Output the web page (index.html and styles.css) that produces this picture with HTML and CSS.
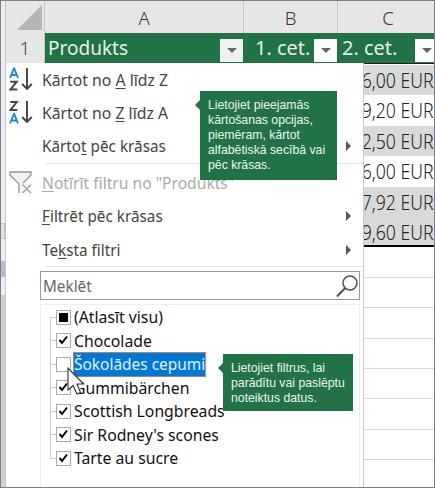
FILE: index.html
```html
<!DOCTYPE html>
<html lang="lv">
<head>
    <meta charset="UTF-8">
    <meta name="viewport" content="width=device-width, initial-scale=1">
    <title>Filtrs</title>
    <link rel="stylesheet" href="styles.css">
</head>
<body>
<div class="window">
    <div class="edge">
        <span class="tab"></span>
        <span class="tab blue"></span>
        <span class="scroll"></span>
    </div>

    <div class="sheet">
        <!-- column letters -->
        <div class="letters">
            <div class="corner"><svg width="25" height="25"><path d="M25 0V25H0z" fill="#b4b4b4"/></svg></div>
            <div class="letter col-a">A</div>
            <div class="letter col-b">B</div>
            <div class="letter col-c">C</div>
        </div>

        <!-- header row -->
        <div class="heads">
            <div class="rownum">1</div>
            <div class="head col-a"><span class="label">Produkts</span><i class="drop open"></i></div>
            <div class="head col-b"><span class="label wide">1. cet.</span><i class="drop"></i></div>
            <div class="head col-c"><span class="label wide">2. cet.</span><i class="drop"></i></div>
        </div>

        <div class="content">
            <div class="menu">
                <div class="item">
                    <svg class="icon" width="26" height="26"><g fill="none" stroke-width="1.9"><path d="M1 11L4.9 1.5h.3L9 11M2.4 8h5.4" stroke="#1e88d2"/><path d="M1.3 14.7h6.5L1.5 22.5h6.8M18 1v21M13.2 17l4.8 5 4.8-5" stroke="#444"/></g></svg>
                    <span class="text sort">Kārtot no <u>A</u> līdz Z</span>
                </div>
                <div class="item">
                    <svg class="icon" width="26" height="26"><g fill="none" stroke-width="1.9"><path d="M1 23.5L4.9 14h.3L9 23.5M2.4 20.5h5.4" stroke="#1e88d2"/><path d="M1.3 2h6.5L1.5 10h6.8M18 1v21M13.2 17l4.8 5 4.8-5" stroke="#444"/></g></svg>
                    <span class="text sort">Kārtot no <u>Z</u> līdz A</span>
                </div>
                <div class="item">
                    <span class="icon"></span>
                    <span class="text">Kārto<u>t</u> pēc krāsas</span>
                    <i class="arrow"></i>
                </div>
                <div class="line"></div>
                <div class="item off">
                    <svg class="icon" width="26" height="26"><path d="M1 2h21v3l-8 8v8l-5-4v-4L1 5z" fill="#f1f1f1"/><g fill="none" stroke="#999" stroke-width="1.4"><path d="M10 23V14L1 5V2h21v3l-8 8"/><path d="M13.5 14.5l8.5 8.5M22 14.5L13.5 23" stroke="#aaa" stroke-width="1.7"/></g></svg>
                    <span class="text"><u>N</u>otīrīt filtru no "Produkts"</span>
                </div>
                <div class="item">
                    <span class="icon"></span>
                    <span class="text"><u>F</u>iltrēt pēc krāsas</span>
                    <i class="arrow"></i>
                </div>
                <div class="item">
                    <span class="icon"></span>
                    <span class="text">Te<u>k</u>sta filtri</span>
                    <i class="arrow"></i>
                </div>
                <div class="line"></div>

                <div class="search">
                    <span class="text">Meklēt</span>
                    <svg width="24" height="24"><circle cx="15" cy="9" r="7" fill="#fafafa" stroke="#505050" stroke-width="1.5"/><path d="M10 14.3L2 22.5" stroke="#505050" stroke-width="2"/></svg>
                </div>

                <div class="list">
                    <div class="row"><span class="box all"></span><span class="name">(Atlasīt visu)</span></div>
                    <div class="row"><span class="box"><svg width="11" height="11"><path d="M1.5 5l2.5 3L9 1.5" class="tick"/></svg></span><span class="name">Chocolade</span></div>
                    <div class="row"><span class="box"></span><span class="name selected">Šokolādes cepumi</span></div>
                    <div class="row"><span class="box"><svg width="11" height="11"><path d="M1.5 5l2.5 3L9 1.5" class="tick"/></svg></span><span class="name">Gummibärchen</span></div>
                    <div class="row"><span class="box"><svg width="11" height="11"><path d="M1.5 5l2.5 3L9 1.5" class="tick"/></svg></span><span class="name">Scottish Longbreads</span></div>
                    <div class="row"><span class="box"><svg width="11" height="11"><path d="M1.5 5l2.5 3L9 1.5" class="tick"/></svg></span><span class="name">Sir Rodney's scones</span></div>
                    <div class="row"><span class="box"><svg width="11" height="11"><path d="M1.5 5l2.5 3L9 1.5" class="tick"/></svg></span><span class="name">Tarte au sucre</span></div>
                </div>
            </div>

            <div class="cells">
                <div class="cell grey"><span>6,00 EUR</span></div>
                <div class="cell"><span>9,20 EUR</span></div>
                <div class="cell grey"><span>2,50 EUR</span></div>
                <div class="cell"><span>6,00 EUR</span></div>
                <div class="cell grey"><span>7,92 EUR</span></div>
                <div class="cell grey last"><span>9,60 EUR</span></div>
                <div class="cell empty"></div>
                <div class="cell empty"></div>
                <div class="cell empty"></div>
                <div class="cell empty"></div>
                <div class="cell empty"></div>
                <div class="cell empty"></div>
                <div class="cell empty"></div>
                <div class="cell"></div>
            </div>
        </div>
    </div>

    <div class="tip tip-sort">Lietojiet pieejamās<br>kārtošanas opcijas,<br>piemēram, kārtot<br>alfabētiskā secībā vai<br>pēc krāsas.</div>
    <div class="tip tip-filter">Lietojiet filtrus, lai<br>parādītu vai paslēptu<br>noteiktus datus.</div>
    <svg class="cursor" width="18" height="30"><path d="M1 1v22l5-4.5 4 8.5 3.5-1.5L10 17h6.5z" fill="#fff" stroke="#333" stroke-width="1.1"/></svg>
</div>
</body>
</html>
```
FILE: styles.css
```css
* {
    box-sizing: border-box;
}

body {
    margin: 0;
    font-family: "Noto Sans", "Open Sans", sans-serif;
}

.window {
    position: relative;
    display: flex;
    width: 435px;
    height: 488px;
    border: 1px solid #7f7f7f;
    overflow: hidden;
    background: #fff;
}

.edge {
    display: flex;
    flex-direction: column;
    width: 5px;
    padding-top: 222px;
    background: #eeeef6;
    border-right: 1px solid #c4c5d0;
}

.tab {
    height: 16px;
    border: 1px solid #c4c0bc;
    border-left: 0;
    background: #e4e2e2;
}

.blue {
    margin-top: 22px;
    border: 0;
    background: #b4bccb;
}

.scroll {
    flex: 1;
    margin-top: 18px;
    background: #d0d0d0;
}

.sheet {
    display: flex;
    flex-direction: column;
    width: 428px;
}

.letters {
    display: flex;
    height: 32px;
    background: #e6e6e6;
}

.corner {
    width: 39px;
    padding: 4px 0 0 11px;
    border-right: 1px solid #c6c6c6;
}

.letter {
    font-size: 18.5px;
    font-weight: 300;
    line-height: 33px;
    text-align: center;
    color: #333;
    border-right: 1px solid #c6c6c6;
}

.col-a {
    width: 199px;
}

.col-b {
    width: 94px;
}

.col-c {
    flex: 1;
    border-right: 0;
}

.letter.col-c {
    padding-left: 4px;
}

.heads {
    display: flex;
    height: 30px;
    background: #217346;
}

.rownum {
    width: 39px;
    background: #e6e6e6;
    color: #444;
    font-size: 19px;
    font-weight: 300;
    line-height: 30px;
    text-align: center;
    border-right: 1px solid #c6c6c6;
}

.head {
    display: flex;
    justify-content: space-between;
    padding: 0 1px 0 3px;
    color: #e6f0ea;
    font-size: 19px;
    line-height: 30px;
    white-space: nowrap;
}

.head.col-b {
    padding-left: 11px;
}

.head.col-c {
    padding: 0 0 0 4px;
}

.drop {
    display: flex;
    flex: none;
    align-items: center;
    justify-content: center;
    width: 23px;
    height: 23px;
    margin-top: 6px;
    background: #fff;
}

.col-c .drop {
    margin-right: -4px;
}

.drop::after {
    content: "";
    border: 5px solid transparent;
    border-top-color: #666;
    border-bottom: 0;
}

.drop.open {
    background: #f0f0f0;
}

.content {
    display: flex;
    flex: 1;
}

.menu {
    width: 358px;
    background: #fff;
    border-right: 1px solid #c8c8c8;
    z-index: 1;
}

.item {
    display: flex;
    align-items: center;
    height: 33.4px;
    padding: 0 12px 0 3px;
    color: #444;
    font-size: 16px;
}

.icon {
    flex: none;
    width: 26px;
    margin-right: 7px;
}

.text,
.name,
.label {
    transform: scaleX(.955);
    transform-origin: left;
    white-space: nowrap;
}

.text.sort {
    transform: scaleX(.985);
}

.name {
    transform: scaleX(.985);
}

.label {
    transform: none;
}

.wide {
    transform: scaleX(1.05);
}

.text u {
    text-underline-offset: 2px;
}

.off {
    margin-top: 2px;
    color: #aaa;
}

.off .text {
    transform: scaleX(.977);
}

.arrow {
    margin-left: auto;
    border: 5px solid transparent;
    border-left-color: #555;
    border-right: 0;
}

.line {
    height: 1px;
    margin-left: 40px;
    background: #e2e2e2;
}

.search {
    display: flex;
    align-items: center;
    justify-content: space-between;
    width: 320px;
    height: 29px;
    margin: 4px 0 0 34px;
    padding-left: 2px;
    border: 1px solid #999;
    color: #666;
    font-size: 16px;
}

.list {
    width: 320px;
    height: 190px;
    margin: 4px 0 0 34px;
    border: 1px solid #eee;
    padding-left: 9px;
}

.row {
    display: flex;
    align-items: center;
    height: 23.5px;
    font-size: 16px;
    color: #111;
    background: linear-gradient(#ccc, #ccc) 0 50% / 6px 1px no-repeat, linear-gradient(#ccc, #ccc) 0 0 / 1px 100% no-repeat;
}

.row:first-child {
    background-position: 0 50%, 0 12px;
}

.row:last-child {
    background-size: 6px 1px, 1px 12px;
}

.box {
    display: flex;
    flex: none;
    align-items: center;
    justify-content: center;
    width: 15px;
    height: 15px;
    margin: 0 3px 0 6px;
    border: 1px solid #aaa;
    background: #fff;
}

.all::after {
    content: "";
    width: 9px;
    height: 9px;
    background: #000;
}

.tick {
    fill: none;
    stroke: #000;
    stroke-width: 2;
}

.name.selected {
    height: 23px;
    line-height: 22px;
    transform: scaleX(.965);
    background: #0078d7;
    color: #e4f0fa;
    outline: 1px solid #b98157;
}

.cells {
    flex: 1;
    min-width: 0;
    padding-top: 1px;
    border-top: 1px solid #222;
}

.cell {
    display: flex;
    justify-content: flex-end;
    height: 30.4px;
    color: #222;
    font-size: 20.5px;
    font-weight: 300;
    line-height: 31px;
    white-space: nowrap;
}

.cell span {
    transform: scaleX(.86);
    transform-origin: right;
}

.grey {
    background: #d9d9d9;
}

.last {
    border-bottom: 2px solid #000;
}

.empty {
    border-bottom: 1px solid #d9d9d9;
}

/* callouts over the menu */
.tip {
    position: absolute;
    z-index: 2;
    padding: 7px 8px;
    background: #217346;
    color: #eef5f1;
    font: 12.25px/15px "Liberation Sans", Arial, sans-serif;
    white-space: nowrap;
}

.tip::before {
    content: "";
    position: absolute;
    top: 9px;
    left: -5px;
    border: 5px solid transparent;
    border-right-color: #217346;
    border-left: 0;
}

.tip-sort {
    left: 199px;
    top: 90px;
    width: 137px;
    height: 89px;
}

.tip-filter {
    left: 222px;
    top: 353px;
    width: 130px;
    height: 57px;
}

.cursor {
    position: absolute;
    z-index: 3;
    left: 66px;
    top: 366px;
}
```
